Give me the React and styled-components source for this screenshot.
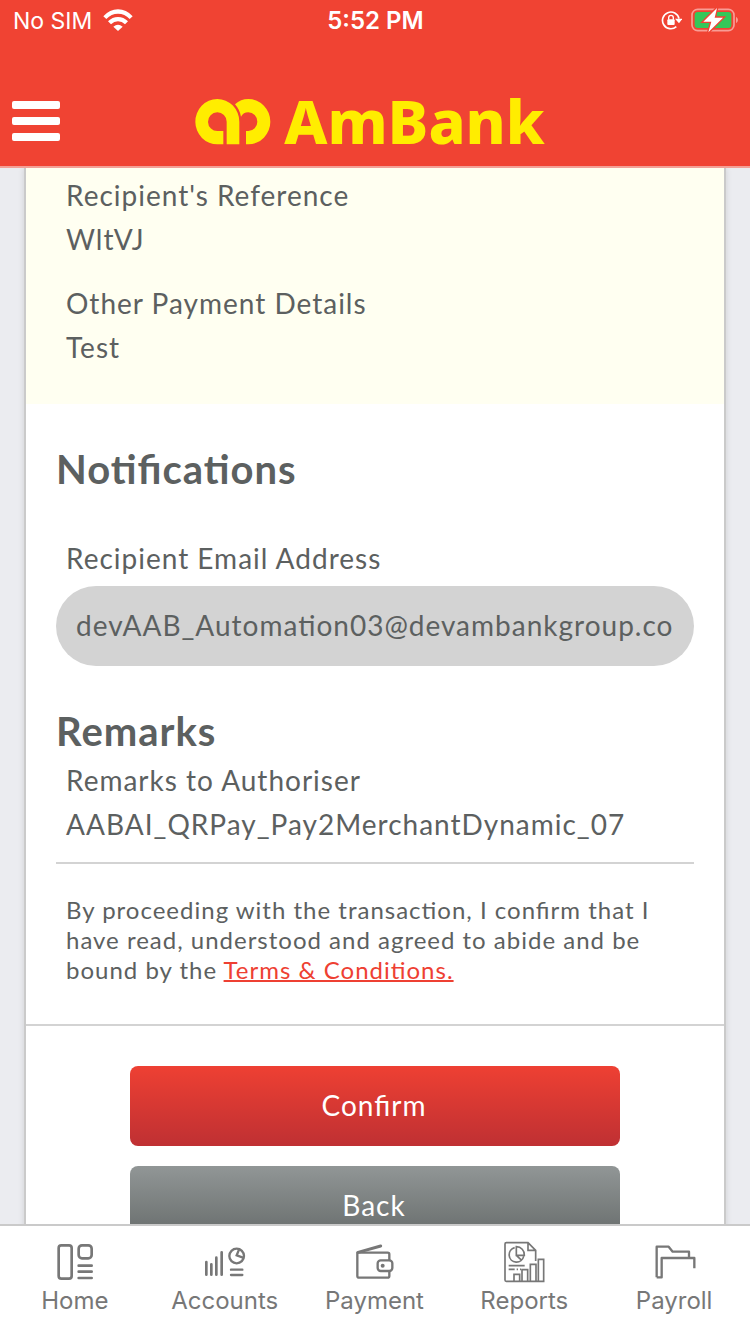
import React from "react";
import styled, { createGlobalStyle } from "styled-components";

const GlobalStyle = createGlobalStyle`
  * { box-sizing: border-box; }
  body { margin: 0; background: #ebecf0; }
  h2, p, dl, dd { margin: 0; }
`;

const body = `Lato, "Open Sans", sans-serif`;
const system = `Inter, Roboto, sans-serif`;

const Screen = styled.div`
  display: flex;
  flex-direction: column;
  height: 100vh;
  overflow: hidden;
  color: #5c6060;
  font-family: ${body};
`;

const Header = styled.header`
  flex: none;
  background: #f04333;
  border-bottom: 2px solid #f3a097;
  color: #fff;
`;

const StatusBar = styled.div`
  display: grid;
  grid-template-columns: 1fr auto 1fr;
  align-items: center;
  height: 40px;
  padding: 0 12px 0 13px;
  font: 400 23px/40px ${system};
`;

const StatusGroup = styled.div`
  display: flex;
  align-items: center;
  justify-content: ${(p) => (p.$end ? "flex-end" : "flex-start")};
  gap: ${(p) => (p.$end ? 8 : 11)}px;
`;

const StatusText = styled.span`
  padding-top: 2px;
  line-height: 38px;
`;

const Clock = styled.time`
  padding-top: 2px;
  font-size: 24px;
  line-height: 38px;
  font-weight: 600;
`;

const TitleBar = styled.div`
  display: grid;
  grid-template-columns: 1fr auto 1fr;
  align-items: center;
  height: 126px;
  padding: 36px 22px 0 12px;
`;

const MenuButton = styled.button`
  display: flex;
  flex-direction: column;
  gap: 8px;
  width: 48px;
  padding: 0;
  border: 0;
  background: none;
`;

const MenuBar = styled.span`
  height: 8px;
  border-radius: 2px;
  background: #fff;
`;

const Brand = styled.a`
  display: flex;
  align-items: center;
  gap: 12px;
  height: 90px;
  color: #ffed00;
  text-decoration: none;
`;

const BrandName = styled.span`
  font: 800 61px/80px "Noto Sans", "Open Sans", sans-serif;
`;

const Scroller = styled.main`
  flex: 1;
  min-height: 0;
  overflow: hidden auto;
  scrollbar-width: none;
  padding: 0 24px;
`;

const Card = styled.form`
  background: #fff;
  border: solid #cacaca;
  border-width: 0 2px;
  box-shadow: 0 0 6px rgba(0, 0, 0, 0.12);
  letter-spacing: 1px;
  font-feature-settings: "liga" 1;
`;

const Details = styled.dl`
  display: flex;
  flex-direction: column;
  gap: 20px;
  padding: ${(p) => (p.$highlight ? "5px 40px 35px" : "3px 10px 16px")};
  background: ${(p) => (p.$highlight ? "#fffff1" : "none")};
  border-bottom: ${(p) => (p.$highlight ? "0" : "2px solid #d3d3d3")};
  font-size: 28px;
  line-height: 44px;
`;

const Section = styled.section`
  display: flex;
  flex-direction: column;
  padding: 41px 30px 0;
`;

const Heading = styled.h2`
  font-size: 40px;
  line-height: 48px;
  font-weight: 700;
`;

const FieldLabel = styled.label`
  margin-top: 43px;
  padding: 0 10px 6px;
  font-size: 28px;
  line-height: 44px;
`;

const TextInput = styled.input`
  width: 100%;
  height: 80px;
  padding: 0 20px 2px;
  border: 0;
  border-radius: 40px;
  background: #d3d3d3;
  color: inherit;
  font: 400 28px/44px ${body};
  font-feature-settings: "liga" 1;
  letter-spacing: 1px;
`;

const Consent = styled.p`
  padding: 31px 40px 39px;
  border-bottom: 2px solid #d3d3d3;
  font-size: 24px;
  line-height: 30px;
`;

const TermsLink = styled.a`
  color: #ee4032;
  text-decoration-thickness: 2px;
`;

const Actions = styled.div`
  display: flex;
  flex-direction: column;
  align-items: center;
  gap: 20px;
  padding: 40px 30px;
`;

const ActionButton = styled.button`
  width: 100%;
  max-width: 490px;
  height: 80px;
  padding: 0 2px 2px 0;
  border: 0;
  border-radius: 8px;
  background: ${(p) =>
    p.$primary
      ? "linear-gradient(#ee4033, #bf3033)"
      : "linear-gradient(#919696, #636867)"};
  color: #fff;
  font: 400 28px/44px ${body};
  font-feature-settings: "liga" 1;
  letter-spacing: 1px;
`;

const TabBar = styled.nav`
  flex: none;
  display: grid;
  grid-template-columns: repeat(5, 1fr);
  height: 110px;
  padding: 16px 1px 0 0;
  border-top: 2px solid #cacaca;
  background: #fff;
`;

const Tab = styled.a`
  display: flex;
  flex-direction: column;
  align-items: center;
  gap: 4px;
  color: #777;
  text-decoration: none;
  font: 400 24px/30px ${system};
`;

const TabIcon = styled.svg.attrs({
  viewBox: "0 0 120 120",
  width: 40,
  height: 40,
  fill: "none",
  stroke: "currentColor",
  "aria-hidden": true,
})`
  overflow: visible;
`;

const tabs = [
  {
    label: "Home",
    icon: (
      <TabIcon strokeWidth="8" strokeLinecap="round">
        <rect x="11" y="10" width="39" height="100" rx="8" />
        <rect x="71" y="10" width="39" height="39" rx="10" />
        <path d="M71 71H110M71 89H110M71 108H110" />
      </TabIcon>
    ),
  },
  {
    label: "Accounts",
    icon: (
      <TabIcon strokeWidth="8" strokeLinecap="round">
        <path d="M4 60V98M19 67V98M34 47V98M50 31V98" />
        <circle cx="95" cy="42" r="22" strokeWidth="7" />
        <path d="M102 23L95 40L114 47" strokeWidth="7" />
        <path d="M78 83H112M78 99H112" strokeWidth="7" />
      </TabIcon>
    ),
  },
  {
    label: "Payment",
    icon: (
      <TabIcon strokeWidth="7" strokeLinecap="round" strokeLinejoin="round">
        <path d="M106 54V37Q106 32 101 32H10V102Q10 107 15 107H101Q106 107 106 102V88" />
        <path d="M12 31L80 12" strokeWidth="9" />
        <rect x="71" y="55" width="44" height="32" rx="9" />
        <circle cx="86" cy="71" r="6" fill="currentColor" stroke="none" />
      </TabIcon>
    ),
  },
  {
    label: "Reports",
    icon: (
      <TabIcon strokeWidth="5">
        <path d="M95 57V25L72 2H7Q3 2 3 6V114Q3 118 7 118H119V52H103V118M72 2V25H95" />
        <path d="M32 17A22 22 0 1 0 59 43M37 14V40H61A24 24 0 0 0 37 14ZM37 40L54 56" />
        <path d="M14 71H62M14 82H32M38 82H42M48 82H51" />
        <path d="M30 118V97H47V118M54 118V83H71V118M79 118V67H96V118" />
      </TabIcon>
    ),
  },
  {
    label: "Payroll",
    icon: (
      <TabIcon strokeWidth="7" strokeLinejoin="round">
        <path d="M8 106V14H44L56 29H105V47M8 106H23V48H121V79" />
      </TabIcon>
    ),
  },
];

function WifiIcon() {
  return (
    <svg width="30" height="22" viewBox="0 0 90 66" fill="#fff" aria-hidden="true">
      <path d="M1 22Q20 1 45 1Q70 1 89 22L80 30Q65 14 45 14Q25 14 10 30Z" />
      <path d="M15 37Q28 24 45 24Q62 24 75 37L66 46Q57 37 45 37Q33 37 24 46Z" />
      <path d="M31 53Q45 41 59 53L45 66Z" />
    </svg>
  );
}

function RotationLockIcon() {
  return (
    <svg width="21" height="20" viewBox="0 0 63 60" fill="none" stroke="#fff" strokeWidth="5" aria-hidden="true">
      <path d="M46 50A25 25 0 1 1 54 26" />
      <path d="M42 26H64L54 40Z" fill="#fff" stroke="none" />
      <rect x="19" y="28" width="22" height="17" rx="3" fill="#fff" stroke="none" />
      <path d="M23 29V23A7 7 0 0 1 37 23V29" strokeWidth="4" />
    </svg>
  );
}

function BatteryIcon() {
  return (
    <svg width="48" height="26" viewBox="0 0 144 78" aria-hidden="true">
      <rect x="6" y="7" width="126" height="64" rx="17" fill="none" stroke="#f89d95" strokeWidth="5" />
      <rect x="14" y="15" width="110" height="48" rx="9" fill="#34c759" />
      <path d="M138 29Q144 33 144 39Q144 45 138 49Z" fill="#f89d95" />
      <path d="M81 3L40 44H64L55 76L99 32H74Z" fill="#fff" stroke="#f04333" strokeWidth="8" paintOrder="stroke" />
    </svg>
  );
}

function BrandMark() {
  return (
    <svg width="77" height="48" viewBox="50 54 231 144" fill="currentColor" aria-hidden="true">
      <path d="M135 196H118A66 68 0 1 1 183 128V196H145V128A28 28 0 1 0 118 156H135Z" />
      <path d="M170 76Q187 60 210 60A66 68 0 0 1 210 196H203V156H210A27 28 0 0 0 210 100Q195 100 188 113Q184 92 170 76Z" />
    </svg>
  );
}

export default function App() {
  return (
    <Screen>
      <GlobalStyle />
      <Header>
        <StatusBar>
          <StatusGroup>
            <StatusText>No SIM</StatusText>
            <WifiIcon />
          </StatusGroup>
          <Clock>5:52 PM</Clock>
          <StatusGroup $end>
            <RotationLockIcon />
            <BatteryIcon />
          </StatusGroup>
        </StatusBar>
        <TitleBar>
          <MenuButton type="button" aria-label="Menu">
            <MenuBar />
            <MenuBar />
            <MenuBar />
          </MenuButton>
          <Brand href="#home">
            <BrandMark />
            <BrandName>AmBank</BrandName>
          </Brand>
        </TitleBar>
      </Header>

      <Scroller>
        <Card onSubmit={(e) => e.preventDefault()}>
          <Details $highlight>
            <div>
              <dt>Recipient's Reference</dt>
              <dd>WltVJ</dd>
            </div>
            <div>
              <dt>Other Payment Details</dt>
              <dd>Test</dd>
            </div>
          </Details>

          <Section>
            <Heading>Notifications</Heading>
            <FieldLabel htmlFor="recipient-email">Recipient Email Address</FieldLabel>
            <TextInput
              id="recipient-email"
              type="email"
              readOnly
              value="devAAB_Automation03@devambankgroup.com"
            />
          </Section>

          <Section>
            <Heading>Remarks</Heading>
            <Details>
              <div>
                <dt>Remarks to Authoriser</dt>
                <dd>AABAI_QRPay_Pay2MerchantDynamic_07</dd>
              </div>
            </Details>
          </Section>

          <Consent>
            By proceeding with the transaction, I confirm that I have read,
            understood and agreed to abide and be bound by the{" "}
            <TermsLink href="#terms">Terms &amp; Conditions.</TermsLink>
          </Consent>

          <Actions>
            <ActionButton type="submit" $primary>Confirm</ActionButton>
            <ActionButton type="button">Back</ActionButton>
          </Actions>
        </Card>
      </Scroller>

      <TabBar>
        {tabs.map((tab) => (
          <Tab key={tab.label} href={`#${tab.label.toLowerCase()}`}>
            {tab.icon}
            {tab.label}
          </Tab>
        ))}
      </TabBar>
    </Screen>
  );
}
